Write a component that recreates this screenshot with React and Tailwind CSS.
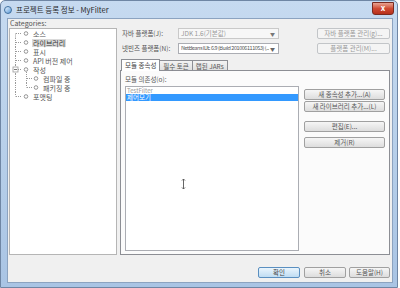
import React from "react";

const font = { fontFamily: '"Noto Sans CJK KR", "Noto Sans", sans-serif' };

const tree = [
  { label: "소스", kind: "first" },
  { label: "라이브러리", kind: "mid", selected: true },
  { label: "표시", kind: "mid" },
  { label: "API 버전 제어", kind: "mid" },
  { label: "작성", kind: "open" },
  { label: "컴파일 중", kind: "child" },
  { label: "패키징 중", kind: "childLast" },
  { label: "포맷팅", kind: "last" },
];

function Connector({ kind }) {
  const dash = "1 1";
  const c = "#9a9a9a";
  const child = kind === "child" || kind === "childLast";
  return (
    <svg width={child ? 32 : 22} height="9" className="shrink-0">
      <line x1="5.5" y1={kind === "first" ? 4.5 : 0} x2="5.5" y2={kind === "last" ? 4.5 : 9} stroke={c} strokeDasharray={dash} />
      {!child && <line x1="6" y1="4.5" x2="12" y2="4.5" stroke={c} strokeDasharray={dash} />}
      {!child && <circle cx="16" cy="4.5" r="1.8" fill="none" stroke="#8a8a8a" strokeWidth="0.9" />}
      {kind === "open" && (
        <g>
          <rect x="3" y="2" width="5" height="5" fill="#fff" stroke="#9a9a9a" strokeWidth="0.8" />
          <line x1="4" y1="4.5" x2="7" y2="4.5" stroke="#555" strokeWidth="0.8" />
          <line x1="16.5" y1="7" x2="16.5" y2="9" stroke={c} strokeDasharray={dash} />
        </g>
      )}
      {child && (
        <g>
          <line x1="16.5" y1="0" x2="16.5" y2={kind === "childLast" ? 4.5 : 9} stroke={c} strokeDasharray={dash} />
          <line x1="17" y1="4.5" x2="23" y2="4.5" stroke={c} strokeDasharray={dash} />
          <circle cx="26" cy="4.5" r="1.8" fill="none" stroke="#8a8a8a" strokeWidth="0.9" />
        </g>
      )}
    </svg>
  );
}

function Btn({ children, w, disabled, primary }) {
  return (
    <div
      className={`h-[11px] ${w} shrink-0 flex items-center justify-center rounded-[2px] border text-[6.5px] leading-none ${
        primary
          ? "border-[#5a8fc0] bg-gradient-to-b from-[#eaf5fd] to-[#bfdcf2] text-[#444]"
          : disabled
          ? "border-[#c2c5c8] bg-[#f4f4f4] text-[#9a9a9a]"
          : "border-[#a0a0a0] bg-gradient-to-b from-[#f6f6f6] to-[#dddddd] text-[#555]"
      }`}
    >
      {children}
    </div>
  );
}

export default function App() {
  return (
    <div className="w-[400px] h-[288px] bg-white overflow-hidden relative" style={font}>
      <div className="w-[398px] h-[288px] flex flex-col rounded-t-[5px] border border-[#6f86a4] bg-gradient-to-b from-[#c6daf0] via-[#b8d0ea] to-[#a9c4e4]">
        {/* title bar */}
        <div className="h-[17px] shrink-0 flex items-center pl-[3px] pr-[3px]">
          <div className="w-[8px] h-[8px] rounded-full bg-gradient-to-br from-[#e8f4ff] to-[#5a9ad6] border border-[#3f6f9f]" />
          <span className="ml-[4px] text-[7.5px] leading-none text-[#2a2a2a]">프로젝트 등록 정보 - MyFilter</span>
          <div className="ml-auto mb-[3px] w-[22px] h-[13px] rounded-b-[3px] border border-[#7a2a20] bg-gradient-to-b from-[#e8a291] via-[#cf4a33] to-[#b7301b] flex items-center justify-center text-white text-[8px] font-bold leading-none">
            x
          </div>
        </div>

        {/* client */}
        <div className="flex-1 ml-[6px] mr-[4px] mb-[4px] border border-[#8ca3c0] bg-[#f0f0f0] flex flex-col">
          <div className="h-[236px] flex">
            {/* left */}
            <div className="w-[109px] pl-[1px] flex flex-col">
              <div className="h-[9px] text-[7px] leading-[9px] text-[#555] pl-[1px]">Categories:</div>
              <div className="h-[227px] border border-[#b5b5b5] bg-white flex flex-col">
                {tree.map((t) => (
                  <div key={t.label} className="h-[9px] flex items-center">
                    <Connector kind={t.kind} />
                    <span
                      className={`text-[7px] leading-[8px] px-[1px] ${
                        t.selected ? "bg-[#dadada] text-[#333]" : "text-[#555]"
                      }`}
                    >
                      {t.label}
                    </span>
                  </div>
                ))}
              </div>
            </div>

            {/* right */}
            <div className="ml-[3px] w-[271px] pt-[9px] flex flex-col">
              <div className="h-[11px] flex items-center">
                <span className="w-[58px] pl-[2px] text-[6.5px] text-[#555] leading-none">자바 플랫폼(J):</span>
                <div className="w-[101px] h-[11px] border border-[#c9c9c9] bg-[#f7f7f7] flex items-center pl-[2px] text-[6.5px] text-[#999] leading-none">
                  <span className="flex-1">JDK 1.6(기본값)</span>
                  <span className="pr-[3px] text-[5px] text-[#777]">▼</span>
                </div>
                <div className="ml-auto mr-[1px]">
                  <Btn w="w-[73px]" disabled>자바 플랫폼 관리(g)...</Btn>
                </div>
              </div>
              <div className="mt-[4px] h-[11px] flex items-center">
                <span className="w-[58px] pl-[2px] text-[6.5px] text-[#555] leading-none">넷빈즈 플랫폼(N):</span>
                <div className="w-[101px] h-[11px] border border-[#abadb3] bg-white flex items-center pl-[2px] text-[#555] leading-none">
                  <span className="flex-1 min-w-0 overflow-hidden whitespace-nowrap text-[5.5px] tracking-[-0.45px]">NetBeans IDE 6.9 (Build 201006111053) (...</span>
                  <span className="shrink-0 pl-[1px] pr-[3px] text-[5px] text-[#666]">▼</span>
                </div>
                <div className="ml-auto mr-[1px]">
                  <Btn w="w-[73px]" disabled>플랫폼 관리(M)...</Btn>
                </div>
              </div>

              {/* tabs */}
              <div className="mt-[5px] h-[12px] flex items-end pl-[1px] relative z-10">
                <div className="h-[12px] px-[3px] border border-b-0 border-[#8c8e94] bg-white text-[6.5px] leading-[11px] text-[#444]">모듈 종속성</div>
                <div className="h-[11px] px-[3px] border border-l-0 border-[#8c8e94] bg-gradient-to-b from-[#f3f3f3] to-[#e0e0e0] text-[6.5px] leading-[10px] text-[#555]">필수 토큰</div>
                <div className="h-[11px] px-[3px] border border-l-0 border-[#8c8e94] bg-gradient-to-b from-[#f3f3f3] to-[#e0e0e0] text-[6.5px] leading-[10px] text-[#555]">랩된 JARs</div>
              </div>
              <div className="-mt-[1px] h-[185px] w-[270px] border border-[#8c8e94] bg-[#fbfbfb] flex flex-col pl-[4px] pt-[4px]">
                <span className="text-[6.5px] leading-[9px] text-[#555]">모듈 의존성(o):</span>
                <div className="mt-[2px] flex">
                  <div className="w-[174px] h-[165px] border border-[#abadb3] bg-white overflow-hidden flex flex-col">
                    <div className="h-[7px] pl-[1px] text-[6px] leading-[7px] text-[#999]">TestFilter</div>
                    <div className="h-[7px] bg-[#3399ff] pl-[1px] text-[6.5px] leading-[7px] text-white">제어모기</div>
                  </div>
                  <div className="ml-[5px] pt-[3px] flex flex-col">
                    <Btn w="w-[81px]">새 종속성 추가...(A)</Btn>
                    <div className="mt-[1px]">
                      <Btn w="w-[81px]">새 라이브러리 추가...(L)</Btn>
                    </div>
                    <div className="mt-[9px]">
                      <Btn w="w-[81px]">편집(E)...</Btn>
                    </div>
                    <div className="mt-[5px]">
                      <Btn w="w-[81px]">제거(R)</Btn>
                    </div>
                  </div>
                </div>
              </div>
            </div>
          </div>

          {/* bottom buttons */}
          <div className="mt-[12px] flex justify-end pr-[2px]">
            <Btn w="w-[42px]" primary>확인</Btn>
            <div className="ml-[4px]">
              <Btn w="w-[42px]">취소</Btn>
            </div>
            <div className="ml-[3px]">
              <Btn w="w-[41px]">도움말(H)</Btn>
            </div>
          </div>
        </div>
      </div>

      {/* mouse cursor */}
      <svg className="absolute left-[180px] top-[178px]" width="7" height="12" viewBox="0 0 7 12">
        <path d="M3.5 1 L3.5 11 M1.5 1 L5.5 1 M1.5 11 L5.5 11 M2 2.5 L3.5 1 L5 2.5 M2 9.5 L3.5 11 L5 9.5" stroke="#fff" strokeWidth="2.2" fill="none" />
        <path d="M3.5 1 L3.5 11 M2 2.5 L3.5 1 L5 2.5 M2 9.5 L3.5 11 L5 9.5" stroke="#555" strokeWidth="0.9" fill="none" />
      </svg>
    </div>
  );
}
